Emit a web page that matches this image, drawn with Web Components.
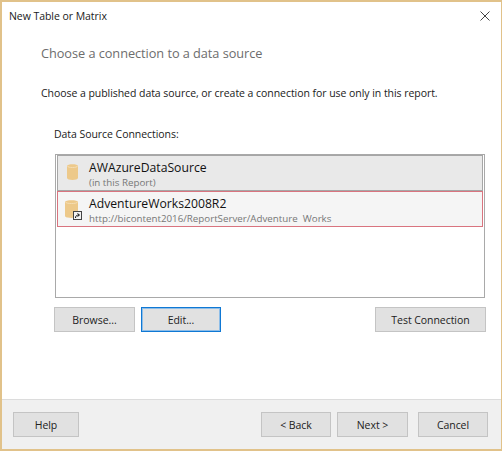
<!DOCTYPE html>
<html>
<head>
<meta charset="utf-8">
<style>
    html, body { margin: 0; padding: 0; background: #fff; }
</style>
</head>
<body>
<wizard-dialog>
    <span slot="title">New Table or Matrix</span>
    <span slot="heading">Choose a connection to a data source</span>
    <span slot="intro">Choose a published data source, or create a connection for use only in this report.</span>
    <span slot="label">Data Source Connections:</span>
    <source-row slot="rows" selected name="AWAzureDataSource" detail="(in this Report)"></source-row>
    <source-row slot="rows" outlined shared name="AdventureWorks2008R2" detail="http://bicontent2016/ReportServer/Adventure&nbsp; Works"></source-row>
    <dlg-button slot="left" w="81">Browse...</dlg-button>
    <dlg-button slot="left" w="80" focused>Edit...</dlg-button>
    <dlg-button slot="right" w="111">Test Connection</dlg-button>
    <dlg-button slot="help" w="66">Help</dlg-button>
    <dlg-button slot="nav" w="70">&lt; Back</dlg-button>
    <dlg-button slot="nav" w="71">Next &gt;</dlg-button>
    <dlg-button slot="cancel" w="70">Cancel</dlg-button>
</wizard-dialog>

<script>
const dialogTemplate = document.createElement('template');
dialogTemplate.innerHTML = `
    <style>
        :host {
            box-sizing: border-box;
            display: flex;
            flex-direction: column;
            width: 502px;
            height: 451px;
            border: 1px solid #e1c28a;
            border-width: 2px 1px 2px 2px;
            background: #fff;
            color: #1a1a1a;
            font-family: "Open Sans", "Noto Sans", sans-serif;
            font-size: 10.5px;
            letter-spacing: -0.05px;
            overflow: hidden;
        }
        .titlebar {
            display: flex;
            justify-content: space-between;
            align-items: center;
            height: 28px;
            padding: 0 11px 0 7px;
        }
        .titlebar svg { display: block; margin-top: -1px; }
        .body {
            flex: 1;
            display: flex;
            flex-direction: column;
            padding: 0 15px 0 39px;
        }
        .heading {
            margin-top: 13px;
            font-size: 12.75px;
            line-height: 20px;
            color: #6d6d6d;
        }
        .intro {
            margin-top: 22px;
            line-height: 16px;
        }
        .group {
            display: flex;
            flex-direction: column;
            margin-left: 13px;
        }
        .label {
            margin-top: 25px;
            line-height: 16px;
        }
        .list {
            box-sizing: border-box;
            display: flex;
            flex-direction: column;
            height: 144px;
            margin: 12px 1px 0;
            border: 1px solid #a9a9a9;
            padding: 0 1px;
        }
        .buttons {
            display: flex;
            gap: 6px;
            margin-top: 9px;
        }
        .spacer { flex: 1; }
        .footer {
            display: flex;
            align-items: center;
            height: 49px;
            padding: 0 13px 0 11px;
            border-top: 1px solid #dcdcdc;
            background: #f0f0f0;
        }
        .nav {
            display: flex;
            gap: 6px;
            margin-right: 10px;
        }
    </style>
    <div class="titlebar">
        <slot name="title"></slot>
        <svg width="10" height="10" viewBox="0 0 10 10"><path d="M0.5 0.5 L9.5 9.5 M9.5 0.5 L0.5 9.5" stroke="#444" stroke-width="1" fill="none"/></svg>
    </div>
    <div class="body">
        <div class="heading"><slot name="heading"></slot></div>
        <div class="intro"><slot name="intro"></slot></div>
        <div class="group">
            <div class="label"><slot name="label"></slot></div>
            <div class="list"><slot name="rows"></slot></div>
            <div class="buttons">
                <slot name="left"></slot>
                <div class="spacer"></div>
                <slot name="right"></slot>
            </div>
        </div>
    </div>
    <div class="footer">
        <slot name="help"></slot>
        <div class="spacer"></div>
        <div class="nav"><slot name="nav"></slot></div>
        <slot name="cancel"></slot>
    </div>
`;

class WizardDialog extends HTMLElement {
    connectedCallback() {
        this.attachShadow({ mode: 'open' });
        this.shadowRoot.appendChild(dialogTemplate.content.cloneNode(true));
    }
}
customElements.define('wizard-dialog', WizardDialog);

const rowTemplate = document.createElement('template');
rowTemplate.innerHTML = `
    <style>
        :host {
            box-sizing: border-box;
            display: flex;
            align-items: center;
            gap: 3px;
            height: 36px;
            padding-left: 6px;
            border: 1px solid transparent;
        }
        :host([selected]) {
            background: #e9e9e9;
            border-color: #a6a6a6;
        }
        :host([outlined]) {
            background: #f5f5f5;
            border-color: #d9747f;
        }
        .icon { position: relative; width: 22px; height: 24px; flex: none; }
        .icon svg { display: block; position: absolute; }
        .cyl { left: 3px; top: 3px; }
        :host([shared]) .cyl { left: 1px; top: 3px; }
        .badge { left: 9px; top: 14px; }
        .text { padding-top: 3px; }
        .name { font-size: 12.2px; line-height: 16px; color: #111; letter-spacing: 0; }
        .detail { font-size: 9.75px; line-height: 14px; color: #777; white-space: nowrap; letter-spacing: 0; }
    </style>
    <div class="icon"></div>
    <div class="text">
        <div class="name"></div>
        <div class="detail"></div>
    </div>
`;

class SourceRow extends HTMLElement {
    connectedCallback() {
        this.attachShadow({ mode: 'open' });
        this.shadowRoot.appendChild(rowTemplate.content.cloneNode(true));
        this.shadowRoot.querySelector('.name').textContent = this.getAttribute('name');
        this.shadowRoot.querySelector('.detail').textContent = this.getAttribute('detail');
        const shared = this.hasAttribute('shared');
        const w = shared ? 13 : 11;
        const h = shared ? 18 : 16;
        let svg = `<svg class="cyl" width="${w}" height="${h}" viewBox="0 0 ${w} ${h}"><path d="M0 2 C0 -0.5 ${w} -0.5 ${w} 2 V${h - 2} C${w} ${h + 0.5} 0 ${h + 0.5} 0 ${h - 2} Z" fill="#edc98a"/><path d="M0.5 2 C0.5 4 ${w - 0.5} 4 ${w - 0.5} 2" stroke="#f5deb5" fill="none"/></svg>`;
        if (shared) {
            svg += `<svg class="badge" width="9" height="9" viewBox="0 0 9 9"><rect x=".5" y=".5" width="8" height="8" fill="#f2f2f2" stroke="#444"/><path d="M2.5 7 C2.5 5 3.5 4 6 4 M4.5 2.5 L6.5 4 L4.5 5.5" stroke="#111" stroke-width="1" fill="none"/></svg>`;
        }
        this.shadowRoot.querySelector('.icon').innerHTML = svg;
    }
}
customElements.define('source-row', SourceRow);

const buttonTemplate = document.createElement('template');
buttonTemplate.innerHTML = `
    <style>
        :host {
            box-sizing: border-box;
            display: flex;
            align-items: center;
            justify-content: center;
            height: 25px;
            flex: none;
            background: #e1e1e1;
            border: 1px solid #c4c4c4;
            color: #222;
        }
        :host([focused]) { border: 1px solid #0f78d4; box-shadow: inset 0 0 0 1px #8dbde8; }
    </style>
    <slot></slot>
`;

class DlgButton extends HTMLElement {
    connectedCallback() {
        this.attachShadow({ mode: 'open' });
        this.shadowRoot.appendChild(buttonTemplate.content.cloneNode(true));
        this.style.width = this.getAttribute('w') + 'px';
    }
}
customElements.define('dlg-button', DlgButton);
</script>
</body>
</html>
